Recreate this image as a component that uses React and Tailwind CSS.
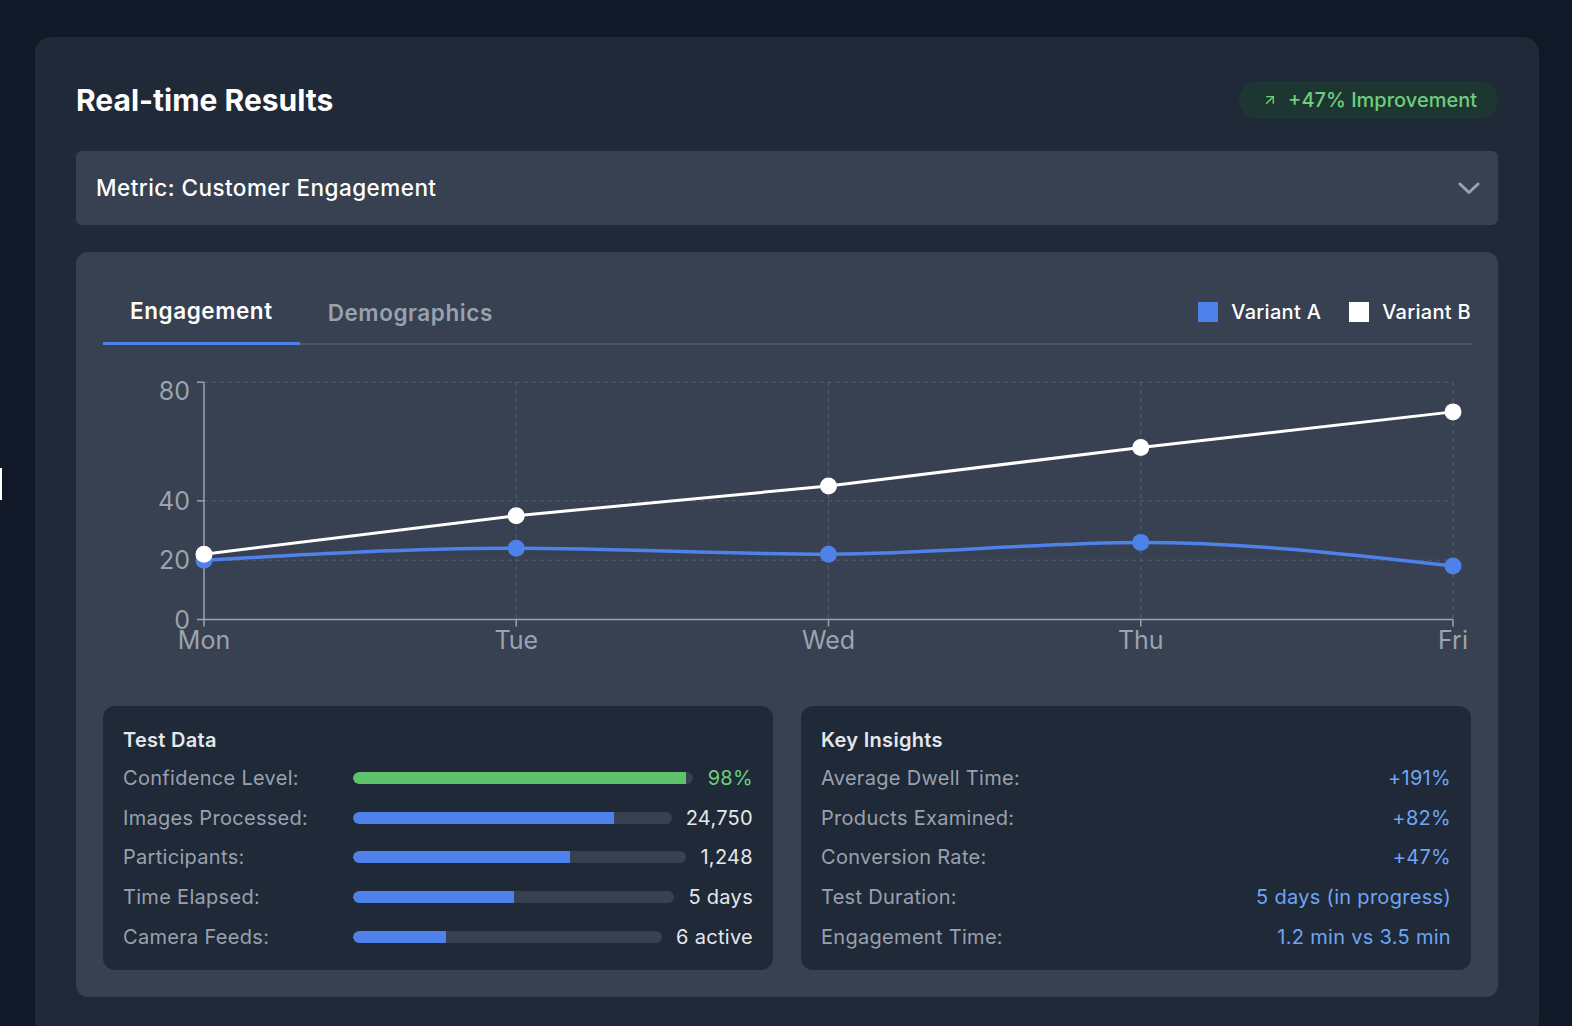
import React from 'react'
import { ArrowUpRight } from 'lucide-react'

const days = ['Mon', 'Tue', 'Wed', 'Thu', 'Fri']
const variantA = [20, 24, 22, 26, 18]
const variantB = [22, 35, 45, 58, 70]

const X0 = 101
const STEP = 312.25
const Y0 = 274.5
const UNIT = 2.966

const px = (i) => X0 + i * STEP
const py = (v) => Y0 - v * UNIT

// monotone-x curve, same maths as d3's curveMonotoneX
function monotonePath(values) {
  const pts = values.map((v, i) => [px(i), py(v)])
  const n = pts.length
  const s = []
  for (let i = 0; i < n - 1; i++) s.push((pts[i + 1][1] - pts[i][1]) / (pts[i + 1][0] - pts[i][0]))
  const t = new Array(n).fill(0)
  for (let i = 1; i < n - 1; i++) {
    const h0 = pts[i][0] - pts[i - 1][0]
    const h1 = pts[i + 1][0] - pts[i][0]
    const p = (s[i - 1] * h1 + s[i] * h0) / (h0 + h1)
    t[i] = (Math.sign(s[i - 1]) + Math.sign(s[i])) * Math.min(Math.abs(s[i - 1]), Math.abs(s[i]), 0.5 * Math.abs(p)) || 0
  }
  t[0] = (3 * s[0] - t[1]) / 2
  t[n - 1] = (3 * s[n - 2] - t[n - 2]) / 2
  let d = `M${pts[0][0]},${pts[0][1]}`
  for (let i = 0; i < n - 1; i++) {
    const dx = (pts[i + 1][0] - pts[i][0]) / 3
    d += ` C${pts[i][0] + dx},${pts[i][1] + dx * t[i]} ${pts[i + 1][0] - dx},${pts[i + 1][1] - dx * t[i + 1]} ${pts[i + 1][0]},${pts[i + 1][1]}`
  }
  return d
}

function Chart() {
  const yTicks = [0, 20, 40, 80]
  const linePath = variantB.map((v, i) => `${i ? 'L' : 'M'}${px(i)},${py(v)}`).join(' ')
  return (
    <svg width="100%" height="337" className="block" style={{ fontFamily: 'Inter, sans-serif' }}>
      {yTicks.filter((v) => v > 0).map((v) => (
        <line key={v} x1={X0} x2={px(4)} y1={py(v)} y2={py(v)} stroke="#566072" strokeDasharray="4 4" />
      ))}
      {days.slice(1).map((d, i) => (
        <line key={d} x1={px(i + 1)} x2={px(i + 1)} y1={py(80)} y2={Y0} stroke="#566072" strokeDasharray="4 4" />
      ))}
      <line x1={X0} x2={X0} y1={py(80)} y2={Y0} stroke="#9ca3af" strokeWidth="1.5" />
      <line x1={X0} x2={px(4)} y1={Y0} y2={Y0} stroke="#9ca3af" strokeWidth="1.5" />
      {yTicks.map((v) => (
        <g key={v}>
          <line x1={X0 - 7} x2={X0} y1={py(v)} y2={py(v)} stroke="#9ca3af" strokeWidth="1.5" />
          <text
            x={87}
            y={v === 80 ? py(v) + 9 : py(v)}
            textAnchor="end"
            dominantBaseline="central"
            fontSize="25"
            fill="#9ca3af"
          >
            {v}
          </text>
        </g>
      ))}
      {days.map((d, i) => (
        <g key={d}>
          <line x1={px(i)} x2={px(i)} y1={Y0} y2={Y0 + 7} stroke="#9ca3af" strokeWidth="1.5" />
          <text x={px(i)} y={304} textAnchor="middle" fontSize="25" fill="#9ca3af">{d}</text>
        </g>
      ))}
      <path d={monotonePath(variantA)} fill="none" stroke="#4f81ea" strokeWidth="3.5" />
      {variantA.map((v, i) => (
        <circle key={i} cx={px(i)} cy={py(v)} r="8.5" fill="#4f81ea" />
      ))}
      <path d={linePath} fill="none" stroke="#ffffff" strokeWidth="3" />
      {variantB.map((v, i) => (
        <circle key={i} cx={px(i)} cy={py(v)} r="8.5" fill="#ffffff" />
      ))}
    </svg>
  )
}

const testData = [
  { label: 'Confidence Level:', value: '98%', pct: 98, green: true },
  { label: 'Images Processed:', value: '24,750', pct: 82 },
  { label: 'Participants:', value: '1,248', pct: 65 },
  { label: 'Time Elapsed:', value: '5 days', pct: 50 },
  { label: 'Camera Feeds:', value: '6 active', pct: 30 },
]

const insights = [
  ['Average Dwell Time:', '+191%'],
  ['Products Examined:', '+82%'],
  ['Conversion Rate:', '+47%'],
  ['Test Duration:', '5 days (in progress)'],
  ['Engagement Time:', '1.2 min vs 3.5 min'],
]

export default function App() {
  return (
    <div className="relative min-h-screen bg-[#111827] pt-[37px] pl-[35px] font-['Inter',sans-serif]">
      <div className="absolute left-0 top-[468px] h-[32px] w-[2px] bg-white" />
      <div className="w-[1504px] rounded-2xl bg-[#1f2937] px-[41px] pt-[44px] pb-10">
        <div className="flex h-[38px] items-center justify-between">
          <h2 className="text-[30px] font-bold text-white">Real-time Results</h2>
          <div className="flex h-[38px] items-center gap-[10px] rounded-full bg-[#1e3632] pl-[23px] pr-[21px] text-[20px] font-medium text-[#6dce7e]">
            <ArrowUpRight size={16} strokeWidth={2} />
            <span>+47% Improvement</span>
          </div>
        </div>

        <div className="mt-8 flex h-[74px] items-center justify-between rounded-md bg-[#374151] pl-5 pr-[18px]">
          <span className="text-[22.5px] font-medium tracking-[0.02em] text-white">Metric: Customer Engagement</span>
          <svg width="22" height="13" viewBox="0 0 22 13" fill="none">
            <polyline points="2,2 11,10.5 20,2" stroke="#9ca3af" strokeWidth="3" strokeLinecap="round" strokeLinejoin="round" />
          </svg>
        </div>

        <div className="mt-[27px] rounded-xl bg-[#374151] px-[27px] pt-[28px] pb-[27px]">
          <div className="flex items-center justify-between border-b-2 border-[#4b5563]">
            <div className="flex">
              <button className="-mb-[2px] h-[65px] border-b-[3px] border-[#4f81ea] px-[27px] text-[22.5px] font-semibold tracking-[0.025em] text-white">
                Engagement
              </button>
              <button className="-mb-[2px] h-[65px] px-[28px] text-[22.5px] font-semibold tracking-[0.025em] text-gray-400">
                Demographics
              </button>
            </div>
            <div className="flex items-center text-[20px] font-medium tracking-[0.015em] text-white">
              <span className="h-5 w-5 bg-[#4f81ea]" />
              <span className="ml-[13px]">Variant A</span>
              <span className="ml-7 h-5 w-5 bg-white" />
              <span className="ml-[13px]">Variant B</span>
            </div>
          </div>

          <Chart />

          <div className="mt-[24px] grid grid-cols-2 gap-7">
            <div className="rounded-xl bg-[#1f2937] px-5 pt-[20px] pb-[13px]">
              <h3 className="mb-1 text-[20px] font-semibold leading-7 tracking-[0.015em] text-gray-200">Test Data</h3>
              {testData.map((r) => (
                <div key={r.label} className="flex h-[39.75px] items-center text-[20px] tracking-[0.015em]">
                  <span className="w-[230px] shrink-0 text-gray-400">{r.label}</span>
                  <div className="h-3 flex-1 overflow-hidden rounded-full bg-[#374151]">
                    <div
                      className={r.green ? 'h-full rounded-l-full bg-[#5fc36c]' : 'h-full rounded-l-full bg-[#4f81ea]'}
                      style={{ width: `${r.pct}%` }}
                    />
                  </div>
                  <span className={r.green ? 'ml-[15px] text-[#6dce7e]' : 'ml-[14px] text-gray-200'}>{r.value}</span>
                </div>
              ))}
            </div>
            <div className="rounded-xl bg-[#1f2937] px-5 pt-[20px] pb-[13px]">
              <h3 className="mb-1 text-[20px] font-semibold leading-7 tracking-[0.015em] text-gray-200">Key Insights</h3>
              {insights.map(([l, v]) => (
                <div key={l} className="flex h-[39.75px] items-center justify-between text-[20px] tracking-[0.015em]">
                  <span className="text-gray-400">{l}</span>
                  <span className="text-[#6fa5f5]">{v}</span>
                </div>
              ))}
            </div>
          </div>
        </div>
      </div>
    </div>
  )
}
